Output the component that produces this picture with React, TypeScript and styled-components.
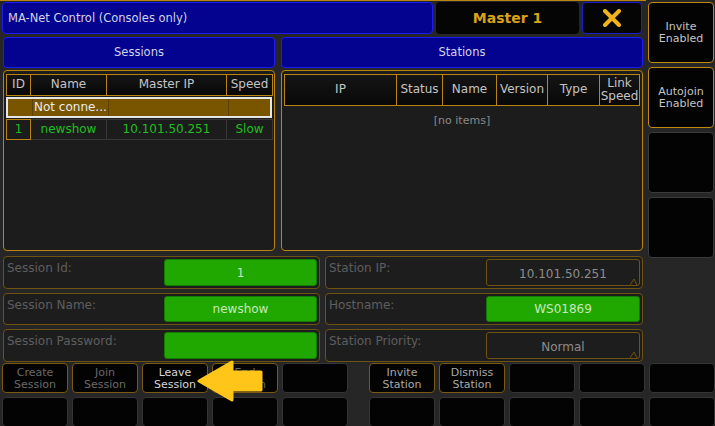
import styled, { createGlobalStyle } from "styled-components";

const GlobalStyle = createGlobalStyle`
  html, body {
    margin: 0;
    padding: 0;
    background: #262626;
  }
  body {
    font-family: "DejaVu Sans", "Liberation Sans", sans-serif;
  }
`;

const gold = "#b9840f";
const dimGold = "#6e5210";

const Screen = styled.div`
  position: relative;
  width: 715px;
  height: 426px;
  overflow: hidden;
  background: #262626;
  font-size: 11px;
`;

const Top = styled.div`
  display: flex;
  height: 362px;
`;

const Main = styled.div`
  width: 644px;
  padding: 1px 0 0 2px;
  border-top: 1px solid ${gold};
  display: flex;
  flex-direction: column;
`;

const TitleRow = styled.div`
  display: flex;
  gap: 3px;
  height: 32px;
`;

const BlueBar = styled.div<{ $center?: boolean; $w: number }>`
  width: ${({ $w }) => $w}px;
  box-sizing: border-box;
  background: #03038f;
  border: 1px solid #1c1cf0;
  border-radius: 4px;
  color: #d4d4e6;
  font-size: 11.5px;
  display: flex;
  align-items: center;
  justify-content: ${({ $center }) => ($center ? "center" : "flex-start")};
  padding-left: ${({ $center }) => ($center ? 0 : 5)}px;
`;

const MasterBox = styled.div`
  width: 143px;
  background: #050505;
  border-radius: 4px;
  color: #d9a21a;
  font-weight: bold;
  font-size: 14px;
  display: flex;
  align-items: center;
  justify-content: center;
`;

const CloseBox = styled.div`
  width: 60px;
  box-sizing: border-box;
  background: #050505;
  border: 1px solid #1c1cd0;
  border-radius: 4px;
  display: flex;
  align-items: center;
  justify-content: center;
`;

const HeaderRow = styled.div`
  display: flex;
  gap: 6px;
  height: 31px;
  margin-top: 3px;
  padding-left: 1px;
`;

const TablesRow = styled.div`
  display: flex;
  gap: 6px;
  height: 182px;
  margin-top: 2px;
  padding-left: 1px;
`;

const TablePanel = styled.div<{ $w: number }>`
  width: ${({ $w }) => $w}px;
  box-sizing: border-box;
  border: 1px solid ${gold};
  border-radius: 4px;
  background: #1c1c1c;
  padding: 3px 2px;
`;

const Grid = styled.div<{ $cols: string; $h: number }>`
  display: grid;
  grid-template-columns: ${({ $cols }) => $cols};
  height: ${({ $h }) => $h}px;
`;

const HeadCell = styled.div`
  box-sizing: border-box;
  background: linear-gradient(#151515, #080808);
  border: 1px solid ${gold};
  border-left-width: 0;
  color: #c4c4c4;
  font-size: 12px;
  line-height: 13px;
  display: flex;
  align-items: center;
  justify-content: center;
  text-align: center;
  white-space: nowrap;
  &:first-child {
    border-left-width: 1px;
  }
`;

const SelectedRow = styled.div`
  display: grid;
  grid-template-columns: 25px 76px 120px 46px;
  height: 21px;
  margin-top: 1px;
  box-sizing: border-box;
  border: 2px solid #e6e6e6;
  background: #7a5500;
`;

const SelCell = styled.div`
  border-right: 1px solid #5c4000;
  color: #ececec;
  font-size: 12px;
  display: flex;
  align-items: center;
  padding-left: 1px;
  white-space: nowrap;
  &:last-child {
    border-right: 0;
  }
`;

const DataRow = styled.div`
  display: grid;
  grid-template-columns: 25px 76px 120px 46px;
  height: 21px;
  margin-top: 1px;
`;

const DataCell = styled.div<{ $boxed?: boolean }>`
  box-sizing: border-box;
  border: 1px solid ${({ $boxed }) => ($boxed ? gold : "#383838")};
  border-left-width: ${({ $boxed }) => ($boxed ? 1 : 0)}px;
  color: #1fbf1f;
  font-size: 12px;
  display: flex;
  align-items: center;
  justify-content: center;
`;

const Empty = styled.div`
  color: #8a8a8a;
  font-size: 11px;
  text-align: center;
  margin-top: 8px;
`;

const FormGrid = styled.div`
  display: grid;
  grid-template-columns: 317px 318px;
  grid-template-rows: 33px 32px 33px;
  column-gap: 5px;
  row-gap: 4px;
  margin-top: 5px;
  padding-left: 1px;
`;

const Field = styled.div`
  position: relative;
  box-sizing: border-box;
  border: 1px solid ${dimGold};
  border-radius: 4px;
  background: #1d1d1d;
  display: flex;
  justify-content: space-between;
  padding: 2px 2px 2px 3px;
`;

const Label = styled.div`
  color: #5e5e5e;
  font-size: 12px;
  padding-top: 2px;
`;

const Value = styled.div<{ $w: number; $green?: boolean }>`
  width: ${({ $w }) => $w}px;
  box-sizing: border-box;
  border-radius: 3px;
  border: 1px solid ${({ $green }) => ($green ? "#157a00" : dimGold)};
  background: ${({ $green }) => ($green ? "#21a800" : "transparent")};
  color: ${({ $green }) => ($green ? "#c6e8bc" : "#8c8c8c")};
  font-size: 12px;
  display: flex;
  align-items: center;
  justify-content: center;
  position: relative;
  padding-top: ${({ $green }) => ($green ? 0 : 2)}px;
`;

const Notch = styled.svg`
  position: absolute;
  right: -1px;
  bottom: -1px;
`;

const Side = styled.div`
  width: 66px;
  margin-left: 2px;
  padding-top: 2px;
  display: flex;
  flex-direction: column;
  gap: 4px;
`;

const SideButton = styled.div<{ $on?: boolean }>`
  height: 61px;
  box-sizing: border-box;
  border: 1px solid ${({ $on }) => ($on ? "#c08a10" : "#3a3a3a")};
  border-radius: 4px;
  background: #030303;
  color: #c4c4c4;
  font-size: 11px;
  line-height: 12px;
  text-align: center;
  display: flex;
  align-items: center;
  justify-content: center;
`;

const Bottom = styled.div`
  display: flex;
  flex-direction: column;
  gap: 4px;
  padding-top: 1px;
`;

const KeyRow = styled.div`
  display: flex;
  justify-content: space-between;
  padding-left: 2px;
`;

const KeyGroup = styled.div`
  display: flex;
  gap: 4px;
`;

const Key = styled.div<{ $tone?: "dim" | "bright" | "mid"; $h: number }>`
  width: 66px;
  height: ${({ $h }) => $h}px;
  box-sizing: border-box;
  border: 1px solid ${({ $tone }) => ($tone ? "#7a5a12" : "#353535")};
  border-radius: 4px;
  background: #030303;
  color: ${({ $tone }) =>
    $tone === "bright" ? "#d6d6d6" : $tone === "mid" ? "#a8a8a8" : "#6a6a6a"};
  font-size: 11px;
  line-height: 12px;
  text-align: center;
  display: flex;
  align-items: center;
  justify-content: center;
  padding-top: 1px;
`;

const Arrow = styled.svg`
  position: absolute;
  left: 196px;
  top: 360px;
`;

type KeyDef = { label?: string[]; tone?: "dim" | "bright" | "mid" };

const leftKeys: KeyDef[] = [
  { label: ["Create", "Session"], tone: "dim" },
  { label: ["Join", "Session"], tone: "dim" },
  { label: ["Leave", "Session"], tone: "bright" },
  { label: ["End", "Session"], tone: "dim" },
  {},
];

const rightKeys: KeyDef[] = [
  { label: ["Invite", "Station"], tone: "mid" },
  { label: ["Dismiss", "Station"], tone: "mid" },
  {},
  {},
  {},
];

const renderKeys = (keys: KeyDef[], h: number, withLabels: boolean) =>
  keys.map((k, i) => (
    <Key key={i} $h={h} $tone={withLabels ? k.tone : undefined}>
      {withLabels && k.label ? (
        <span>
          {k.label[0]}
          <br />
          {k.label[1]}
        </span>
      ) : null}
    </Key>
  ));

const DropNotch = () => (
  <Notch width="10" height="9" viewBox="0 0 10 9">
    <path d="M0 8 L4 2 L7 8" fill="#1d1d1d" stroke={dimGold} strokeWidth="1" />
  </Notch>
);

export default function App() {
  return (
    <>
      <GlobalStyle />
      <Screen>
        <Top>
          <Main>
            <TitleRow>
              <BlueBar $w={431}>MA-Net Control (Consoles only)</BlueBar>
              <MasterBox>Master 1</MasterBox>
              <CloseBox>
                <svg width="20" height="18" viewBox="0 0 20 18">
                  <path
                    d="M3 2 L17 16 M17 2 L3 16"
                    stroke="#f2b21c"
                    strokeWidth="4"
                    strokeLinecap="round"
                  />
                </svg>
              </CloseBox>
            </TitleRow>

            <HeaderRow>
              <BlueBar $w={272} $center>
                Sessions
              </BlueBar>
              <BlueBar $w={362} $center>
                Stations
              </BlueBar>
            </HeaderRow>

            <TablesRow>
              <TablePanel $w={272}>
                <Grid $cols="25px 76px 120px 46px" $h={22}>
                  <HeadCell>ID</HeadCell>
                  <HeadCell>Name</HeadCell>
                  <HeadCell>Master IP</HeadCell>
                  <HeadCell>Speed</HeadCell>
                </Grid>
                <SelectedRow>
                  <SelCell />
                  <SelCell>Not conne...</SelCell>
                  <SelCell />
                  <SelCell />
                </SelectedRow>
                <DataRow>
                  <DataCell $boxed>1</DataCell>
                  <DataCell>newshow</DataCell>
                  <DataCell>10.101.50.251</DataCell>
                  <DataCell>Slow</DataCell>
                </DataRow>
              </TablePanel>

              <TablePanel $w={362}>
                <Grid $cols="113px 46px 54px 51px 52px 40px" $h={32}>
                  <HeadCell>IP</HeadCell>
                  <HeadCell>Status</HeadCell>
                  <HeadCell>Name</HeadCell>
                  <HeadCell>Version</HeadCell>
                  <HeadCell>Type</HeadCell>
                  <HeadCell>
                    Link
                    <br />
                    Speed
                  </HeadCell>
                </Grid>
                <Empty>[no items]</Empty>
              </TablePanel>
            </TablesRow>

            <FormGrid>
              <Field>
                <Label>Session Id:</Label>
                <Value $w={153} $green>
                  1
                </Value>
              </Field>
              <Field>
                <Label>Station IP:</Label>
                <Value $w={154}>
                  10.101.50.251
                  <DropNotch />
                </Value>
              </Field>
              <Field>
                <Label>Session Name:</Label>
                <Value $w={153} $green>
                  newshow
                </Value>
              </Field>
              <Field>
                <Label>Hostname:</Label>
                <Value $w={154} $green>
                  WS01869
                </Value>
              </Field>
              <Field>
                <Label>Session Password:</Label>
                <Value $w={153} $green />
              </Field>
              <Field>
                <Label>Station Priority:</Label>
                <Value $w={154}>
                  Normal
                  <DropNotch />
                </Value>
              </Field>
            </FormGrid>
          </Main>

          <Side>
            <SideButton $on>
              Invite
              <br />
              Enabled
            </SideButton>
            <SideButton $on>
              Autojoin
              <br />
              Enabled
            </SideButton>
            <SideButton />
            <SideButton />
          </Side>
        </Top>

        <Bottom>
          <KeyRow>
            <KeyGroup>{renderKeys(leftKeys, 30, true)}</KeyGroup>
            <KeyGroup>{renderKeys(rightKeys, 30, true)}</KeyGroup>
          </KeyRow>
          <KeyRow>
            <KeyGroup>{renderKeys(leftKeys, 30, false)}</KeyGroup>
            <KeyGroup>{renderKeys(rightKeys, 30, false)}</KeyGroup>
          </KeyRow>
        </Bottom>

        <Arrow width="70" height="44" viewBox="0 0 70 44">
          <path
            d="M3 21 L36 2 L36 12 L65 12 L65 30 L36 30 L36 40 Z"
            fill="#ffc519"
            stroke="#ffc519"
            strokeWidth="3"
            strokeLinejoin="round"
          />
        </Arrow>
      </Screen>
    </>
  );
}
